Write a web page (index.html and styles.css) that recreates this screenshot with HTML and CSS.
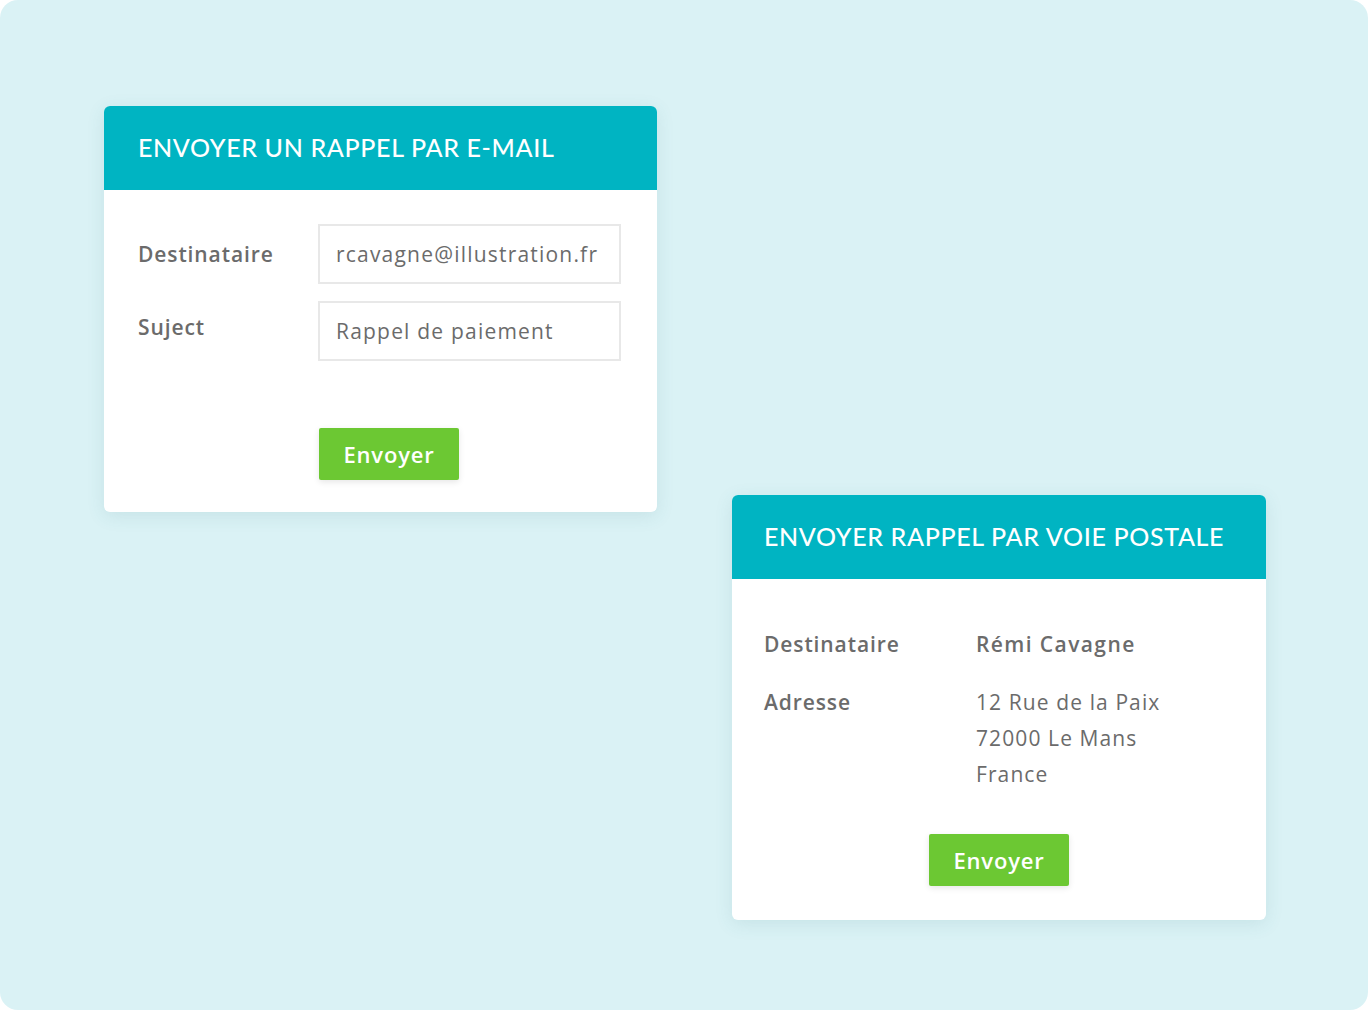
FILE: index.html
```html
<!DOCTYPE html>
<html lang="fr">
<head>
<meta charset="utf-8">
<title>Rappels</title>
<link rel="stylesheet" href="styles.css">
</head>
<body>
<main class="panel">
  <section class="card card-email">
    <header class="card-head"><h2>ENVOYER UN RAPPEL PAR E-MAIL</h2></header>
    <div class="card-body">
      <div class="field-row">
        <span class="label">Destinataire</span>
        <div class="input">rcavagne@illustration.fr</div>
      </div>
      <div class="field-row">
        <span class="label label-subject">Suject</span>
        <div class="input">Rappel de paiement</div>
      </div>
      <div class="actions-left">
        <button class="btn">Envoyer</button>
      </div>
    </div>
  </section>

  <section class="card card-post">
    <header class="card-head"><h2>ENVOYER RAPPEL PAR VOIE POSTALE</h2></header>
    <div class="card-body post-body">
      <div class="info-row">
        <span class="label">Destinataire</span>
        <span class="value strong">Rémi Cavagne</span>
      </div>
      <div class="info-row">
        <span class="label">Adresse</span>
        <span class="value">12 Rue de la Paix<br>72000 Le Mans<br>France</span>
      </div>
      <div class="actions-center">
        <button class="btn">Envoyer</button>
      </div>
    </div>
  </section>
</main>
</body>
</html>
```

FILE: styles.css
```css
* { box-sizing: border-box; }
html, body { margin: 0; padding: 0; background: #ffffff; }
body {
  font-family: "Open Sans", Lato, "Liberation Sans", sans-serif;
  color: #6b6b6b;
}
.panel {
  width: 1368px;
  height: 1010px;
  background: #daf2f5;
  border-radius: 18px;
  padding: 106px 0 0 104px;
  display: grid;
  grid-template-columns: 553px 534px;
  column-gap: 75px;
  align-items: start;
}
.card {
  background: #ffffff;
  border-radius: 6px;
  overflow: hidden;
  box-shadow: 0 4px 18px rgba(60, 120, 130, 0.12);
}
.card-post { margin-top: 389px; }
.card-head {
  background: #00b4c2;
  height: 84px;
  display: flex;
  align-items: center;
  padding-left: 34px;
}
.card-post .card-head { padding-left: 32px; }
.card-head h2 {
  margin: 0;
  color: #ffffff;
  font-family: Lato, "Open Sans", sans-serif;
  font-size: 25px;
  font-weight: 500;
  letter-spacing: 0.65px;
  padding-bottom: 2px;
}
.card-body {
  padding: 34px 36px 32px 34px;
}
.field-row {
  display: grid;
  grid-template-columns: 180px 303px;
  align-items: center;
  margin-bottom: 17px;
}
.label {
  font-size: 21px;
  font-weight: 600;
  color: #6b6b6b;
  letter-spacing: 0.9px;
}
.label-subject { align-self: start; padding-top: 12px; }
.input {
  height: 60px;
  border: 2px solid #e8e8e8;
  padding: 0 16px;
  display: flex;
  align-items: center;
  font-size: 21px;
  color: #6b6b6b;
  white-space: nowrap;
  letter-spacing: 1.2px;
}
.actions-left {
  padding-left: 181px;
  padding-top: 50px;
}
.btn {
  width: 140px;
  height: 52px;
  background: #6cc833;
  color: #ffffff;
  border: none;
  border-radius: 2px;
  font-family: inherit;
  font-size: 22px;
  font-weight: 600;
  letter-spacing: 0.8px;
  box-shadow: 0 2px 6px rgba(0, 0, 0, 0.10);
  padding: 0;
}
.post-body {
  padding: 47px 32px 34px 32px;
}
.info-row {
  display: grid;
  grid-template-columns: 212px 1fr;
  line-height: 36px;
  margin-bottom: 22px;
}
.value {
  font-size: 21px;
  color: #6b6b6b;
  letter-spacing: 1.1px;
}
.value.strong { font-weight: 600; letter-spacing: 1.4px; }
.actions-center {
  display: flex;
  justify-content: center;
  padding-top: 20px;
}
```
